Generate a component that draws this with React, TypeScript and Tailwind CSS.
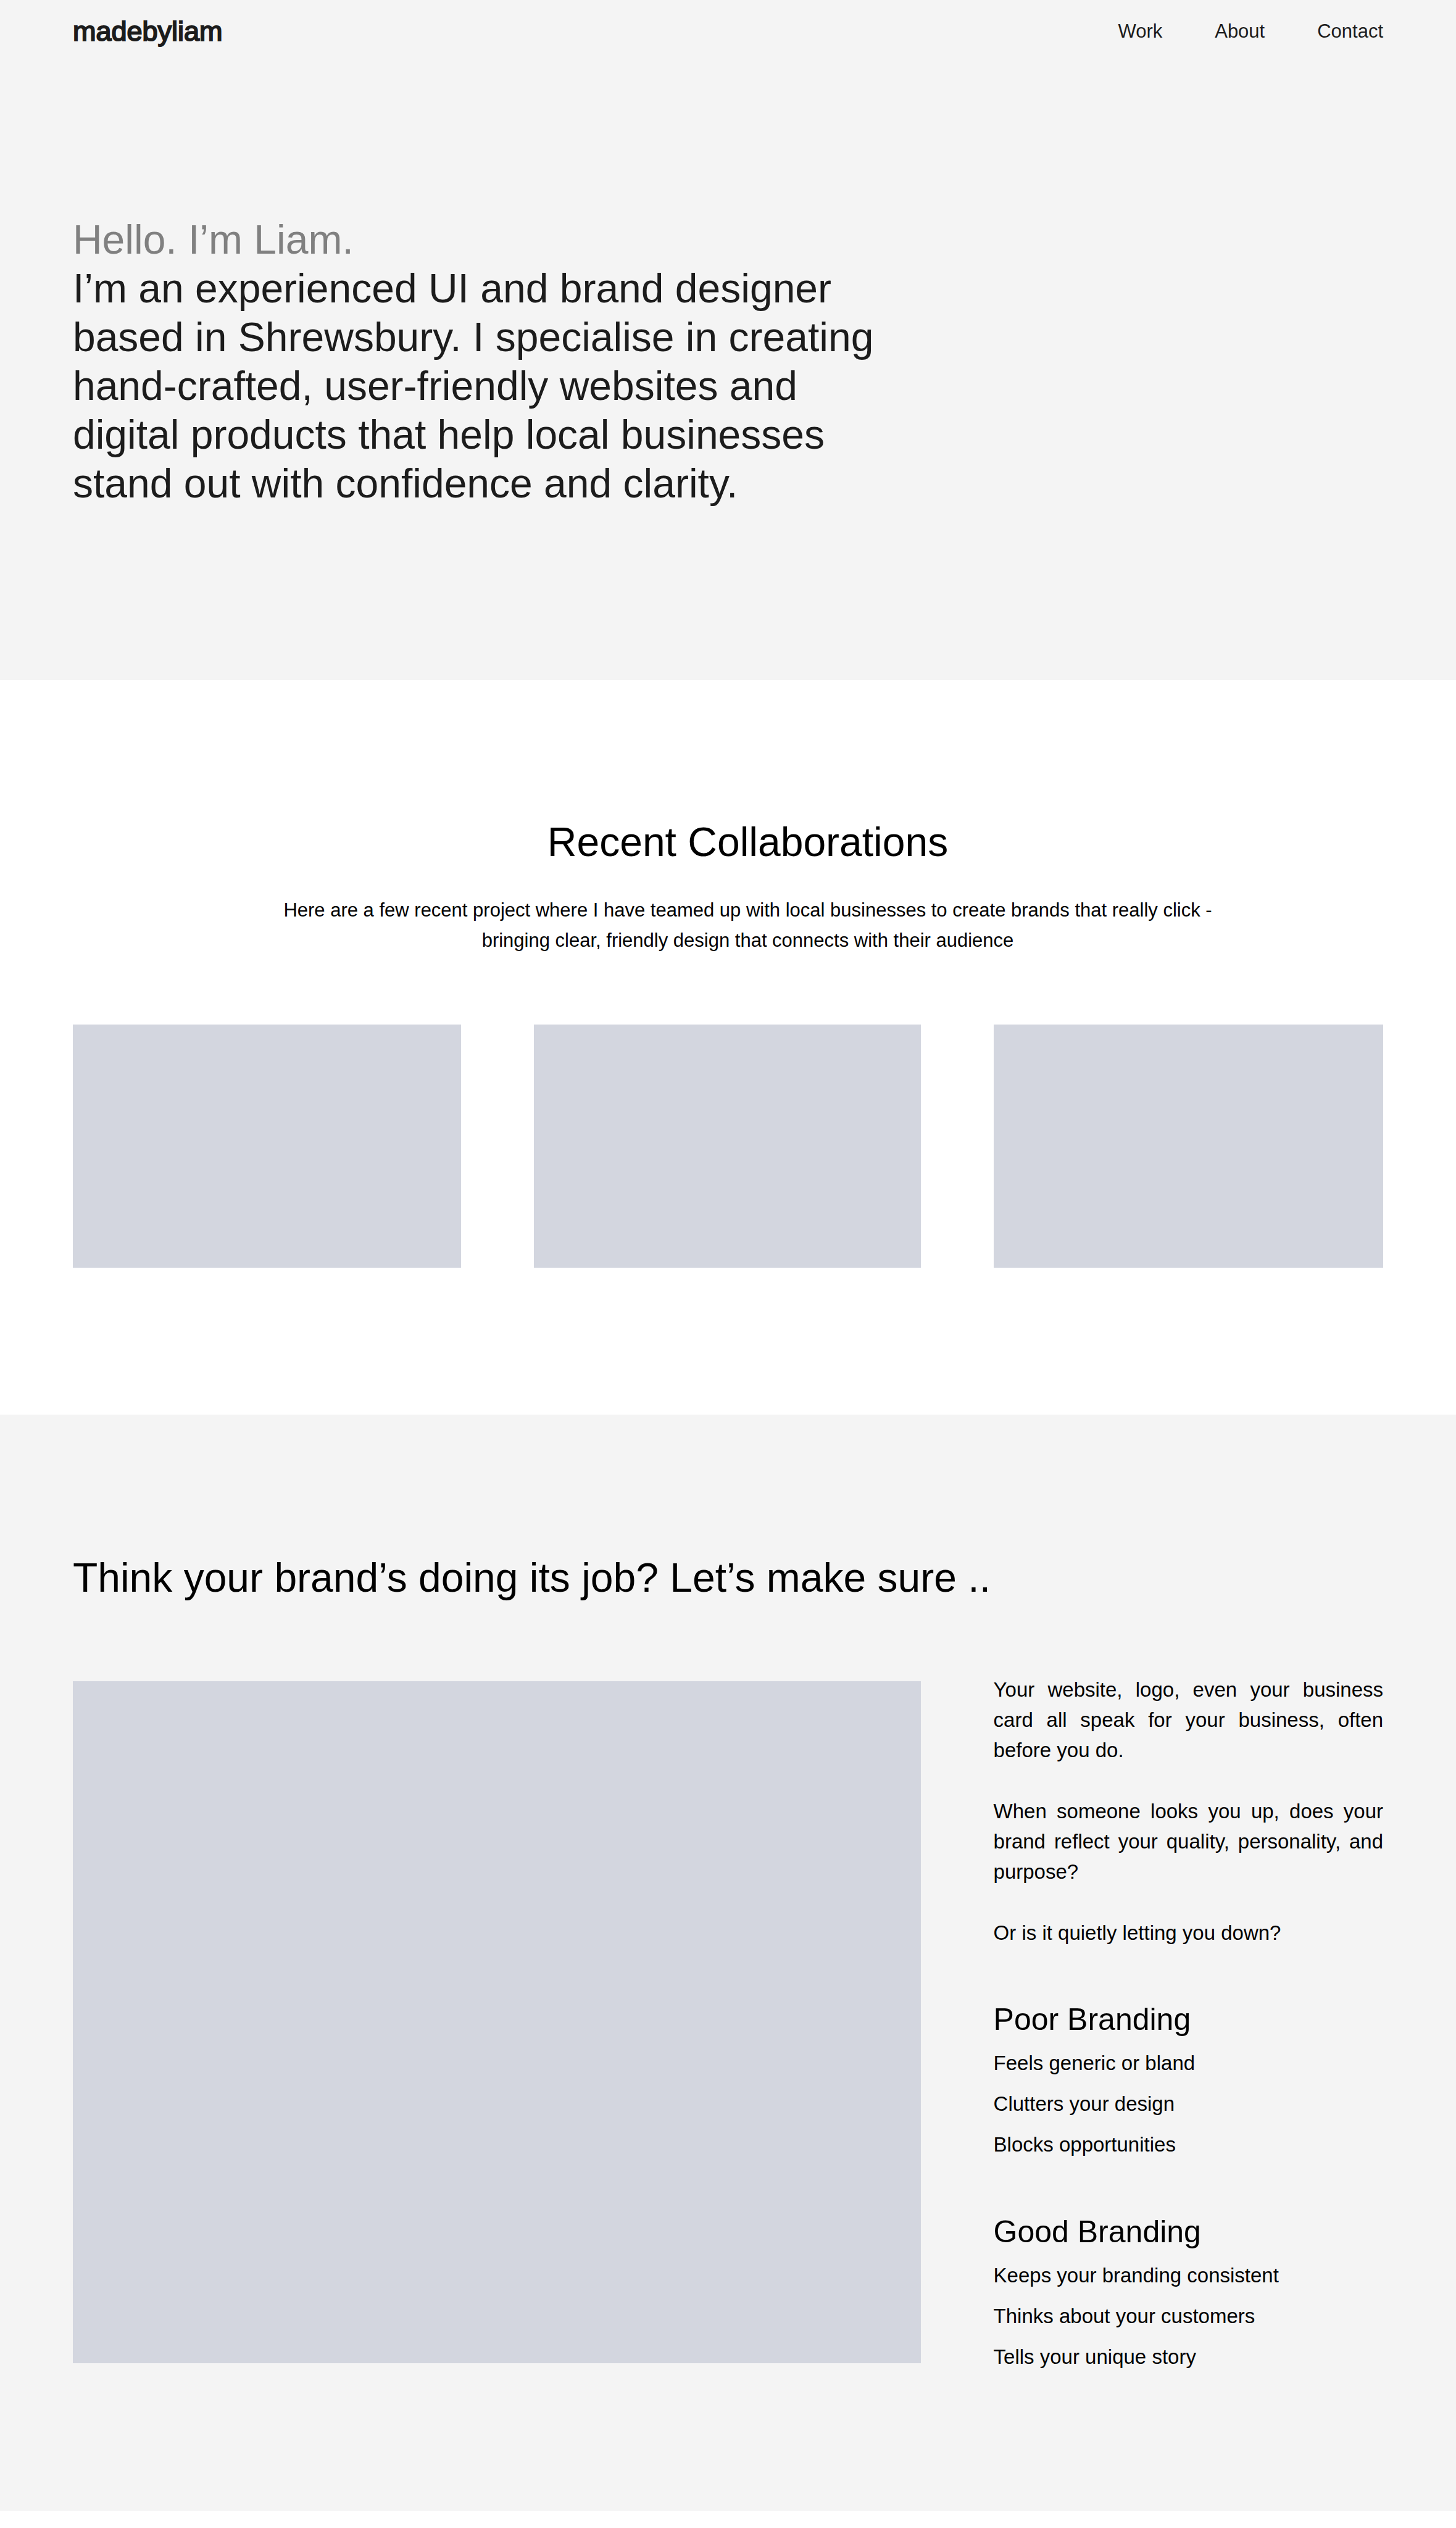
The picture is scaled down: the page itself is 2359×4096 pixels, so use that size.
const navLinks = ["Work", "About", "Contact"];

const collaborations = ["Project one", "Project two", "Project three"];

const comparisons = [
  {
    title: "Poor Branding",
    points: ["Feels generic or bland", "Clutters your design", "Blocks opportunities"],
  },
  {
    title: "Good Branding",
    points: [
      "Keeps your branding consistent",
      "Thinks about your customers",
      "Tells your unique story",
    ],
  },
];

function Header() {
  return (
    <header className="flex h-[100px] items-center justify-between">
      <a href="#" className="text-[45px] leading-none [-webkit-text-stroke:2px_#1c1c1c]">
        madebyliam
      </a>
      <nav className="flex gap-[85px] text-[31px] leading-none">
        {navLinks.map((label) => (
          <a key={label} href={`#${label.toLowerCase()}`}>
            {label}
          </a>
        ))}
      </nav>
    </header>
  );
}

function Hero() {
  return (
    <section className="bg-[#f4f4f4] px-[5%] pb-[279px] text-[#1c1c1c]">
      <Header />
      <h1 className="mt-[249px] max-w-[1330px] text-[66px] leading-[79px]">
        <span className="block text-[#808080]">Hello. I’m Liam.</span>
        I’m an experienced UI and brand designer based in Shrewsbury. I specialise in creating
        hand-crafted, user-friendly websites and digital products that help local businesses stand
        out with confidence and clarity.
      </h1>
    </section>
  );
}

function Collaborations() {
  return (
    <section id="work" className="bg-white px-[5%] pt-[222px] pb-[238px]">
      <div className="pl-16 text-center">
        <h2 className="text-[66px] leading-[80px]">Recent Collaborations</h2>
        <p className="mx-auto mt-[46px] max-w-[1520px] text-[31px] leading-[49px]">
          Here are a few recent project where I have teamed up with local businesses to create
          brands that really click - bringing clear, friendly design that connects with their
          audience
        </p>
      </div>
      <div className="mt-[112px] grid grid-cols-[256fr_255fr_257fr] gap-[118px]">
        {collaborations.map((name) => (
          <div key={name} role="img" aria-label={name} className="h-[394px] bg-[#d3d6df]" />
        ))}
      </div>
    </section>
  );
}

function Branding() {
  return (
    <section id="about" className="bg-[#f4f4f4] px-[5%] pt-[224px] pb-[216px]">
      <h2 className="text-[66px] leading-[80px]">
        Think your brand’s doing its job? Let’s make sure ..
      </h2>
      <div className="mt-[117px] grid grid-cols-[256fr_255fr_257fr] gap-x-[118px]">
        <div
          role="img"
          aria-label="Branding example"
          className="col-span-2 mt-[11px] h-[1105px] bg-[#d3d6df]"
        />
        <div>
          <div className="flex flex-col gap-[50px] text-justify text-[33px] leading-[49px]">
            <p>Your website, logo, even your business card all speak for your business, often before you do.</p>
            <p>When someone looks you up, does your brand reflect your quality, personality, and purpose?</p>
            <p>Or is it quietly letting you down?</p>
          </div>
          <div className="mt-[86px] flex flex-col gap-[78px]">
            {comparisons.map(({ title, points }) => (
              <div key={title}>
                <h3 className="text-[50px] leading-[60px]">{title}</h3>
                <ul className="mt-2 text-[33px] leading-[66px]">
                  {points.map((point) => (
                    <li key={point}>{point}</li>
                  ))}
                </ul>
              </div>
            ))}
          </div>
        </div>
      </div>
    </section>
  );
}

export default function App() {
  return (
    <main className="bg-white font-['Liberation_Sans',Arial,sans-serif] text-black">
      <Hero />
      <Collaborations />
      <Branding />
    </main>
  );
}
